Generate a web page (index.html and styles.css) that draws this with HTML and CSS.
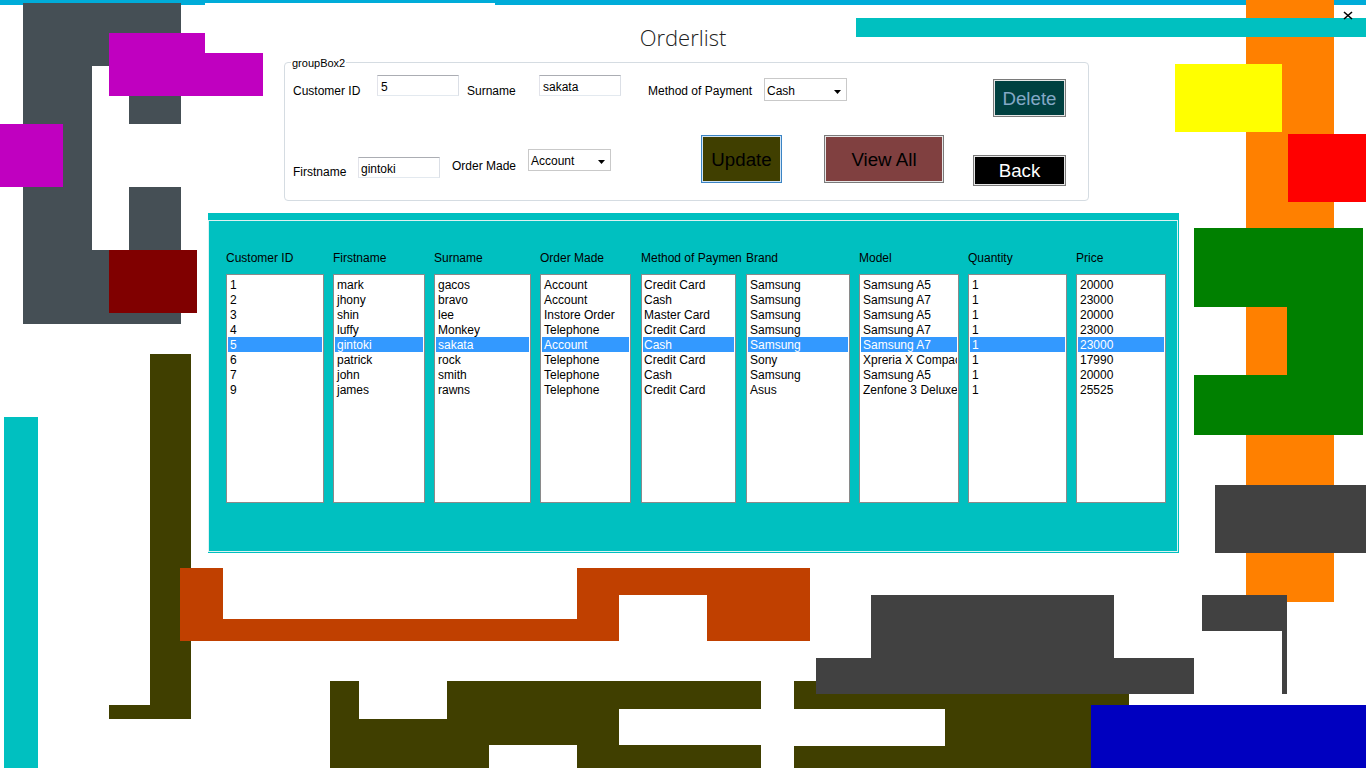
FILE: index.html
```html
<!DOCTYPE html>
<html>
<head>
<meta charset="utf-8">
<title>Orderlist</title>
<link rel="stylesheet" href="styles.css">
</head>
<body>
<div class="page">
  <div class="accent accent-thin"></div>
  <div class="accent accent-left"></div>
  <div class="accent accent-right"></div>

  <div class="shape gray g1"></div>
  <div class="shape gray g2"></div>
  <div class="shape gray g3"></div>
  <div class="shape gray g4"></div>
  <div class="shape gray g5"></div>
  <div class="shape magenta m1"></div>
  <div class="shape magenta m2"></div>
  <div class="shape magenta m3"></div>
  <div class="shape maroon mr1"></div>
  <div class="shape teal t1"></div>
  <div class="shape orange or1"></div>
  <div class="shape teal t2"></div>
  <div class="shape yellow y1"></div>
  <div class="shape red r1"></div>
  <div class="shape green gr1"></div>
  <div class="shape green gr2"></div>
  <div class="shape green gr3"></div>
  <div class="shape dark d1"></div>
  <div class="shape olive o1"></div>
  <div class="shape olive o2"></div>
  <div class="shape brown b1"></div>
  <div class="shape brown b2"></div>
  <div class="shape brown b3"></div>
  <div class="shape brown b4"></div>
  <div class="shape brown b5"></div>
  <div class="shape olive o3"></div>
  <div class="shape olive o4"></div>
  <div class="shape olive o5"></div>
  <div class="shape olive o6"></div>
  <div class="shape olive o7"></div>
  <div class="shape olive o8"></div>
  <div class="shape olive o9"></div>
  <div class="shape olive o10"></div>
  <div class="shape olive o11"></div>
  <div class="shape dark d2"></div>
  <div class="shape dark d3"></div>
  <div class="shape dark d4"></div>
  <div class="shape dark d5"></div>
  <div class="shape blue bl1"></div>

  <svg class="close" width="10" height="9" viewBox="0 0 10 9"><path d="M1 1 L9 8 M9 1 L1 8" stroke="#000" stroke-width="1.6" fill="none"/></svg>

  <div class="content">
    <h1 class="title">Orderlist</h1>

    <div class="groupbox">
      <span class="legend">groupBox2</span>
      <div class="row row1">
        <span class="lbl l-cid">Customer ID</span>
        <div class="textbox tb1">5</div>
        <span class="lbl l-sur">Surname</span>
        <div class="textbox tb2">sakata</div>
        <span class="lbl l-mop">Method of Payment</span>
        <div class="combo cb1"><span>Cash</span><svg class="arrow" width="7" height="4" viewBox="0 0 7 4"><path d="M0 0 H7 L3.5 4 Z" fill="#000"/></svg></div>
        <div class="btn btn-delete">Delete</div>
      </div>
      <div class="row row2">
        <span class="lbl l-fn">Firstname</span>
        <div class="textbox tb3">gintoki</div>
        <span class="lbl l-om">Order Made</span>
        <div class="combo cb2"><span>Account</span><svg class="arrow" width="7" height="4" viewBox="0 0 7 4"><path d="M0 0 H7 L3.5 4 Z" fill="#000"/></svg></div>
        <div class="btn btn-update">Update</div>
        <div class="btn btn-viewall">View All</div>
        <div class="btn btn-back">Back</div>
      </div>
    </div>

    <div class="panel">
      <div class="panel-inner">
        <div class="col c1">
          <div class="hdr">Customer ID</div>
          <ul class="list">
            <li>1</li><li>2</li><li>3</li><li>4</li><li class="sel">5</li><li>6</li><li>7</li><li>9</li>
          </ul>
        </div>
        <div class="col c2">
          <div class="hdr">Firstname</div>
          <ul class="list">
            <li>mark</li><li>jhony</li><li>shin</li><li>luffy</li><li class="sel">gintoki</li><li>patrick</li><li>john</li><li>james</li>
          </ul>
        </div>
        <div class="col c3">
          <div class="hdr">Surname</div>
          <ul class="list">
            <li>gacos</li><li>bravo</li><li>lee</li><li>Monkey</li><li class="sel">sakata</li><li>rock</li><li>smith</li><li>rawns</li>
          </ul>
        </div>
        <div class="col c4">
          <div class="hdr">Order Made</div>
          <ul class="list">
            <li>Account</li><li>Account</li><li>Instore Order</li><li>Telephone</li><li class="sel">Account</li><li>Telephone</li><li>Telephone</li><li>Telephone</li>
          </ul>
        </div>
        <div class="col c5">
          <div class="hdr">Method of Paymen</div>
          <ul class="list">
            <li>Credit Card</li><li>Cash</li><li>Master Card</li><li>Credit Card</li><li class="sel">Cash</li><li>Credit Card</li><li>Cash</li><li>Credit Card</li>
          </ul>
        </div>
        <div class="col c6">
          <div class="hdr">Brand</div>
          <ul class="list">
            <li>Samsung</li><li>Samsung</li><li>Samsung</li><li>Samsung</li><li class="sel">Samsung</li><li>Sony</li><li>Samsung</li><li>Asus</li>
          </ul>
        </div>
        <div class="col c7">
          <div class="hdr">Model</div>
          <ul class="list">
            <li>Samsung A5</li><li>Samsung A7</li><li>Samsung A5</li><li>Samsung A7</li><li class="sel">Samsung A7</li><li>Xpreria X Compact</li><li>Samsung A5</li><li>Zenfone 3 Deluxe</li>
          </ul>
        </div>
        <div class="col c8">
          <div class="hdr">Quantity</div>
          <ul class="list">
            <li>1</li><li>1</li><li>1</li><li>1</li><li class="sel">1</li><li>1</li><li>1</li><li>1</li>
          </ul>
        </div>
        <div class="col c9">
          <div class="hdr">Price</div>
          <ul class="list">
            <li>20000</li><li>23000</li><li>20000</li><li>23000</li><li class="sel">23000</li><li>17990</li><li>20000</li><li>25525</li>
          </ul>
        </div>
      </div>
    </div>
  </div>
</div>
</body>
</html>
```

FILE: styles.css
```css
* { box-sizing: border-box; }
html, body { margin: 0; padding: 0; background: #ffffff; }
body {
  font-family: "Liberation Sans", Arial, sans-serif;
  font-size: 12px;
  line-height: 15px;
  color: #000;
}
.page {
  position: relative;
  width: 1366px;
  height: 768px;
  overflow: hidden;
  background: #fff;
}

/* window accent line */
.accent { position: absolute; top: 0; background: #00acd9; }
.accent-thin { left: 0; width: 1366px; height: 3px; }
.accent-left { left: 0; width: 205px; height: 5px; }
.accent-right { left: 495px; width: 871px; height: 5px; }

/* decorative canvas shapes */
.shape { position: absolute; }
.gray { background: #454f55; }
.magenta { background: #c000c0; }
.maroon { background: #800000; }
.teal { background: #00c0c0; }
.orange { background: #ff8000; }
.yellow { background: #ffff00; }
.red { background: #ff0000; }
.green { background: #008000; }
.dark { background: #414141; }
.olive { background: #403f00; }
.brown { background: #c04000; }
.blue { background: #0000c0; }

.g1 { left: 23px; top: 3px; width: 69px; height: 321px; }
.g2 { left: 92px; top: 3px; width: 89px; height: 63px; }
.g3 { left: 129px; top: 66px; width: 52px; height: 58px; }
.g4 { left: 129px; top: 187px; width: 52px; height: 137px; }
.g5 { left: 92px; top: 250px; width: 37px; height: 74px; }
.m1 { left: 109px; top: 33px; width: 96px; height: 63px; }
.m2 { left: 205px; top: 53px; width: 58px; height: 43px; }
.m3 { left: 0; top: 124px; width: 63px; height: 63px; }
.mr1 { left: 109px; top: 250px; width: 88px; height: 63px; }
.t1 { left: 4px; top: 417px; width: 34px; height: 351px; }
.t2 { left: 856px; top: 18px; width: 510px; height: 19px; }
.or1 { left: 1246px; top: 0; width: 88px; height: 602px; }
.y1 { left: 1175px; top: 64px; width: 107px; height: 68px; }
.r1 { left: 1288px; top: 134px; width: 78px; height: 68px; }
.gr1 { left: 1194px; top: 228px; width: 169px; height: 79px; }
.gr2 { left: 1287px; top: 307px; width: 76px; height: 68px; }
.gr3 { left: 1194px; top: 375px; width: 169px; height: 60px; }
.d1 { left: 1215px; top: 485px; width: 151px; height: 68px; }
.o1 { left: 150px; top: 354px; width: 41px; height: 365px; }
.o2 { left: 109px; top: 705px; width: 41px; height: 14px; }
.b1 { left: 180px; top: 568px; width: 43px; height: 73px; }
.b2 { left: 223px; top: 619px; width: 354px; height: 22px; }
.b3 { left: 577px; top: 568px; width: 233px; height: 27px; }
.b4 { left: 577px; top: 595px; width: 42px; height: 46px; }
.b5 { left: 707px; top: 595px; width: 103px; height: 46px; }
.o3 { left: 330px; top: 681px; width: 29px; height: 87px; }
.o4 { left: 447px; top: 681px; width: 314px; height: 28px; }
.o5 { left: 447px; top: 709px; width: 172px; height: 10px; }
.o6 { left: 359px; top: 719px; width: 260px; height: 26px; }
.o7 { left: 359px; top: 745px; width: 130px; height: 23px; }
.o8 { left: 577px; top: 745px; width: 184px; height: 23px; }
.o9 { left: 794px; top: 681px; width: 335px; height: 28px; }
.o10 { left: 945px; top: 709px; width: 184px; height: 37px; }
.o11 { left: 794px; top: 746px; width: 335px; height: 22px; }
.d2 { left: 871px; top: 595px; width: 243px; height: 63px; }
.d3 { left: 816px; top: 658px; width: 378px; height: 36px; }
.d4 { left: 1202px; top: 595px; width: 85px; height: 36px; }
.d5 { left: 1282px; top: 631px; width: 5px; height: 63px; }
.bl1 { left: 1091px; top: 705px; width: 275px; height: 63px; }

.close { position: absolute; left: 1343px; top: 11px; }

/* form content */
.content { position: relative; }
.title {
  margin: 0;
  padding-top: 23px;
  height: 51px;
  text-align: center;
  font-family: "Open Sans", "Noto Sans", sans-serif;
  font-weight: 300;
  font-size: 22px;
  line-height: 28px;
  color: #222;
}

.groupbox {
  position: relative;
  margin: 11px 0 0 284px;
  width: 805px;
  height: 139px;
  border: 1px solid #d5dce2;
  border-radius: 4px;
}
.legend {
  position: absolute;
  left: 6px;
  top: -6px;
  padding: 0 1px;
  background: #fff;
  font-size: 11px;
  line-height: 13px;
}
.row { display: flex; align-items: flex-start; }
.row1 { height: 54px; }
.row2 { height: 83px; }
.lbl { display: block; white-space: nowrap; }

.l-cid { margin: 21px 0 0 8px; width: 84px; }
.tb1 { margin-top: 12px; }
.l-sur { margin: 21px 0 0 8px; width: 72px; }
.tb2 { margin-top: 12px; }
.l-mop { margin: 21px 0 0 27px; width: 116px; }
.cb1 { margin-top: 15px; }
.btn-delete { margin: 16px 0 0 146px; width: 73px; height: 38px; }

.l-fn { margin: 48px 0 0 8px; width: 65px; }
.tb3 { margin-top: 40px; }
.l-om { margin: 42px 0 0 12px; width: 76px; }
.cb2 { margin-top: 32px; }
.btn-update { margin: 18px 0 0 90px; width: 81px; height: 48px; }
.btn-viewall { margin: 18px 0 0 42px; width: 120px; height: 48px; }
.btn-back { margin: 38px 0 0 29px; width: 93px; height: 31px; }

.textbox {
  width: 82px;
  height: 21px;
  padding: 4px 2px 0 3px;
  border: 1px solid;
  border-color: #abadb3 #dbdfe6 #e3e9ef #e2e3ea;
  background: #fff;
  white-space: nowrap;
}
.tb3 { padding-left: 2px; }

.combo {
  width: 83px;
  height: 23px;
  display: flex;
  justify-content: space-between;
  align-items: flex-start;
  padding: 5px 5px 0 2px;
  border: 1px solid #c9c9c9;
  background: #fff;
}
.cb2 { height: 22px; padding-top: 4px; }
.arrow { align-self: center; margin-top: -1px; }

.btn {
  display: flex;
  align-items: center;
  justify-content: center;
  border: 1px solid #7a7a7a;
  box-shadow: inset 0 0 0 1px #e6e6e6;
  font-size: 18.7px;
  line-height: 22px;
}
.btn-delete { background: #004040; color: #84a8c6; padding-top: 2px; }
.btn-update {
  background: #403f00;
  color: #000;
  border-color: #3b84c4;
  box-shadow: inset 0 0 0 1px #cfe3f5;
  padding-top: 2px;
}
.btn-viewall { background: #804040; color: #000; padding-top: 2px; }
.btn-back { background: #000; color: #fff; }

/* list panel */
.panel {
  margin: 12px 0 0 208px;
  width: 971px;
  height: 340px;
  background: #00c0c0;
  padding-top: 7px;
}
.panel-inner {
  width: 970px;
  height: 332px;
  border: 1px solid #dcf2f2;
  display: flex;
  padding-left: 17px;
}
.col { display: flex; flex-direction: column; }
.c1 { width: 107px; }
.c2 { width: 101px; }
.c3 { width: 106px; }
.c4 { width: 101px; }
.c5 { width: 105px; }
.c6 { width: 113px; }
.c7 { width: 109px; }
.c8 { width: 108px; }
.c9 { width: 100px; }
.hdr {
  margin-top: 30px;
  height: 15px;
  white-space: nowrap;
}
.list {
  list-style: none;
  margin: 8px 0 0 0;
  padding: 2px 1px 1px 1px;
  height: 229px;
  background: #fff;
  border: 1px solid #8a8a8a;
  overflow: hidden;
}
.c1 .list { width: 98px; }
.c2 .list { width: 92px; }
.c3 .list { width: 97px; }
.c4 .list { width: 91px; }
.c5 .list { width: 95px; }
.c6 .list { width: 104px; }
.c7 .list { width: 100px; }
.c8 .list { width: 99px; }
.c9 .list { width: 90px; }
.list li {
  height: 15px;
  line-height: 17px;
  padding-left: 2px;
  white-space: nowrap;
  overflow: hidden;
}
.c5 .list li { padding-left: 1px; }
.list li.sel { background: #3399ff; color: #fff; }
```
